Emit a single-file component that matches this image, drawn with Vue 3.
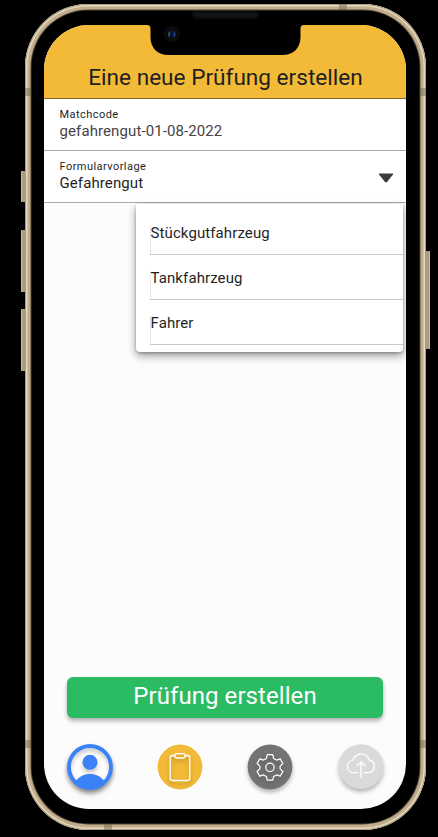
<script setup>
const options = ['Stückgutfahrzeug', 'Tankfahrzeug', 'Fahrer']
</script>

<template>
  <main class="stage">
    <div class="phone">
      <span class="key key-mute"></span>
      <span class="key key-up"></span>
      <span class="key key-down"></span>
      <span class="key key-power"></span>
      <span class="band b1"></span>
      <span class="band b2"></span>
      <span class="band b3"></span>
      <span class="band b4"></span>
      <span class="band b5"></span>
      <span class="band b6"></span>
      <span class="speaker"></span>
      <div class="screen">
        <header class="header"><h1>Eine neue Prüfung erstellen</h1></header>
        <section class="field">
          <label>Matchcode</label>
          <div class="value muted">gefahrengut-01-08-2022</div>
        </section>
        <section class="field select">
          <div>
            <label>Formularvorlage</label>
            <div class="value">Gefahrengut</div>
          </div>
          <svg class="caret" width="16" height="10" viewBox="0 0 16 10"><path d="M1 .4h14v1L8.800 9.200H7.200L1 1.400z" fill="#403a3e" /></svg>
        </section>
        <div class="content">
          <ul class="menu">
            <li v-for="o in options" :key="o">{{ o }}</li>
          </ul>
        </div>
        <button class="create">Prüfung erstellen</button>
        <nav class="tabs">
          <svg class="tab shadowed" viewBox="0 0 46 46">
            <defs><clipPath id="disc"><circle cx="23" cy="23" r="22" /></clipPath></defs>
            <circle cx="23" cy="23" r="21" fill="#fff" stroke="none" />
            <g class="lifted">
              <circle cx="23" cy="23" r="21" fill="none" stroke="#3b82f8" stroke-width="3.800" />
              <circle cx="23" cy="18.300" r="7.500" fill="#3b82f8" />
              <path clip-path="url(#disc)" d="M8 38C12 32.500 17 30 23 30s11 2.500 15 8v8H8z" fill="#3b82f8" />
            </g>
          </svg>
          <svg class="tab" viewBox="0 0 46 46">
            <circle cx="23" cy="23" r="22.400" fill="#f3ba37" />
            <g class="lifted" fill="none" stroke="#fff" stroke-width="1.300">
              <path d="M18 11.500h-2.300a2.500 2.500 0 0 0-2.500 2.500v20a2.500 2.500 0 0 0 2.500 2.500h14.600a2.500 2.500 0 0 0 2.500-2.500V14a2.500 2.500 0 0 0-2.500-2.500H28" />
              <rect x="18" y="9.700" width="10" height="4.300" rx="1.500" />
            </g>
          </svg>
          <svg class="tab shadowed" viewBox="0 0 46 46">
            <circle cx="23" cy="23" r="22.400" fill="#737373" />
            <g class="lifted" fill="none" stroke="#fff" stroke-width="1.200" stroke-linejoin="round">
              <path d="M20.200 10.600h5.600l.8 3.800 3 1.700 3.600-1.200 2.700 4.600-2.800 2.600v2.800l2.800 2.600-2.700 4.600-3.600-1.200-3 1.700-.8 3.500h-5.600l-.8-3.500-3-1.700-3.600 1.200-2.700-4.600 2.800-2.600v-2.800l-2.800-2.600 2.700-4.600 3.600 1.200 3-1.700z" />
              <circle cx="23" cy="23.300" r="4.200" />
            </g>
          </svg>
          <svg class="tab shadowed" viewBox="0 0 46 46">
            <circle cx="23" cy="22.600" r="22.400" fill="#dadada" />
            <g fill="none" stroke="#fff" stroke-width="1.300" stroke-linecap="round" stroke-linejoin="round">
              <path d="M20 28.700h-5a6.300 6.300 0 0 1-.2-12.500 8.700 8.700 0 0 1 16.500-.2 6.500 6.500 0 0 1-.2 12.700H26" />
              <path d="M23 33.500V18M19.200 21.800l3.800-3.800 3.800 3.800" />
            </g>
          </svg>
        </nav>
      </div>
      <svg class="notch" width="157" height="32" viewBox="0 0 157 32">
        <path d="M0 0v1c2.500 0 3.500 1 3.500 4v8c0 11 7 18 18 18h114c11 0 18-7 18-18V5c0-3 1-4 3.500-4V0z" fill="#000" />
        <circle cx="25" cy="10.200" r="8.300" fill="#0b0b0d" />
        <circle cx="25" cy="10.400" r="4.400" fill="#080f20" />
        <path d="M23.800 7a3.600 3.600 0 0 0-1.500 6.400z" fill="#235657" />
        <path d="M26.500 7.200a3.500 3.500 0 0 1 0 6.300z" fill="#15419b" />
      </svg>
    </div>
  </main>
</template>

<style>
body { margin: 0; background: #000; }
</style>

<style scoped>
* { box-sizing: border-box; }
.stage {
  width: 438px;
  height: 837px;
  padding: 4px 12px 7px 24.500px;
  background: #000;
  overflow: hidden;
  font-family: Roboto, "Liberation Sans", sans-serif;
  color: #1f1f1f;
}
.phone {
  position: relative;
  height: 826px;
  padding: 21px 20px 20.500px 19.500px;
  border-radius: 63px;
  background: #000;
  box-shadow: inset 0 0 0 1px #a79b82, inset 0 0 0 2.500px #e5d9c1, inset 0 0 0 5.500px #c1ad89, inset 0 0 0 6.500px #51483a;
}
.key { position: absolute; left: -3.500px; width: 4px; background: #ac9d80; border-left: 1px solid #c8bda5; border-radius: 1px 0 0 1px; }
.key-mute { top: 167px; height: 31px; }
.key-up { top: 226px; height: 62px; }
.key-down { top: 305px; height: 62px; }
.key-power { left: auto; right: -4px; top: 247px; height: 98px; border-left: 0; border-right: 1px solid #c8bda5; border-radius: 0 1px 1px 0; }
.band { position: absolute; background: rgba(105, 95, 75, .45); width: 6px; height: 8px; }
.b1 { left: 0; top: 84px; }
.b2 { right: 0; top: 84px; }
.b3 { left: 0; top: 736px; }
.b4 { right: 0; top: 736px; }
.b5 { top: 0; right: 79px; width: 8px; height: 6px; }
.b6 { bottom: 0; left: 79.500px; width: 8px; height: 6px; }
.speaker { position: absolute; left: 167px; top: 7px; width: 67px; height: 8px; border: 1px solid #111; border-radius: 3px 3px 5px 5px; background: #151517; box-shadow: inset 0 0 0 1px #070707; }
.notch { position: absolute; left: 122px; top: 20px; }
.screen {
  height: 784px;
  display: flex;
  flex-direction: column;
  border-radius: 45px;
  overflow: hidden;
  background: #fcfcfc;
}
.header { height: 74px; flex: none; background: #f3ba37; border-bottom: 1px solid #80652a; display: flex; align-items: flex-end; justify-content: center; }
h1 { margin: 0 0 6px; font-size: 22.600px; line-height: 28px; font-weight: 400; white-space: nowrap; padding-left: 1px; }
.field { height: 52px; flex: none; background: #fff; border-bottom: 1px solid #aaa; padding: 9px 12px 0 15.500px; }
label { display: block; font-size: 11px; line-height: 13px; letter-spacing: .45px; }
.value { font-size: 15px; line-height: 20px; letter-spacing: .1px; }
.muted { color: #484346; }
.select { display: flex; justify-content: space-between; }
.caret { margin-top: 13px; }
.content { flex: 1; padding-left: 92px; }
.menu { margin: 1px 3px 0 0; padding: 6px 0 7px 14px; height: 148px; list-style: none; background: #fff; border-radius: 1px 1px 4px 4px; box-shadow: 0 4px 8px rgba(0, 0, 0, .38), 0 1px 3px rgba(0, 0, 0, .25); }
li { height: 45px; border-bottom: 1px solid #c9c9c9; background: linear-gradient(#e6e6e6, #e6e6e6) 0 100% / 1px 28px no-repeat; padding-left: .5px; font-size: 15px; line-height: 46px; letter-spacing: .1px; }
.create { flex: none; margin: 0 23px; height: 41px; padding: 0 0 3px; border: 0; border-radius: 6px; background: #2abb63; color: #fff; font: 400 24px/38px Roboto, "Liberation Sans", sans-serif; letter-spacing: .07px; box-shadow: 0 3px 4px rgba(0, 0, 0, .3); }
.tabs { flex: none; height: 91px; padding: 26px 21.500px 0 22.500px; display: flex; justify-content: space-between; }
.tab { width: 46px; height: 46px; overflow: visible; }
.tab:nth-child(3) { margin-right: 1.500px; }
.shadowed { filter: drop-shadow(0 3px 2px rgba(0, 0, 0, .28)); }
.lifted { filter: drop-shadow(0 3px 2px rgba(0, 0, 0, .25)); }
</style>
